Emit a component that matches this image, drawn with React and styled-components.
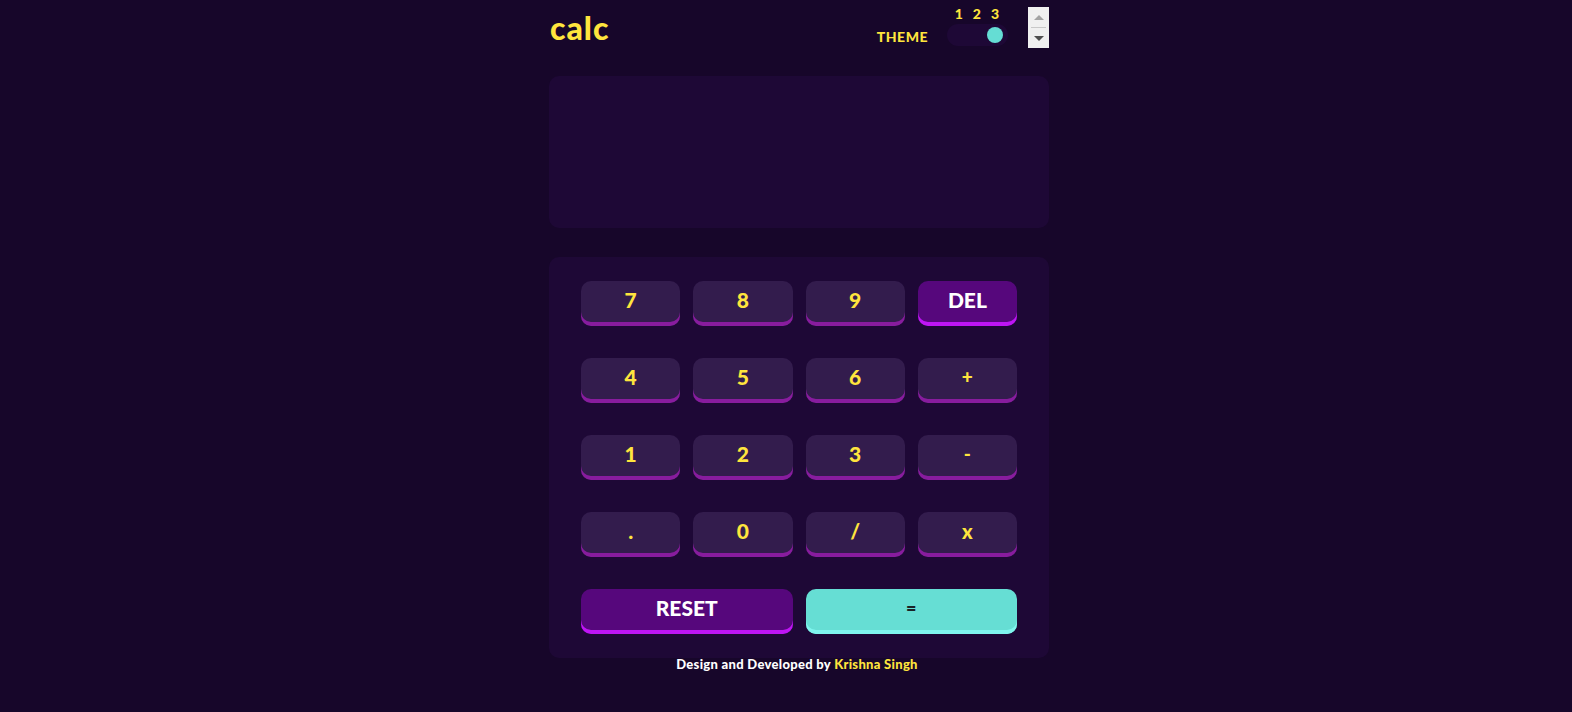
import React from "react";
import styled, { createGlobalStyle } from "styled-components";

const Global = createGlobalStyle`
  html, body { margin: 0; padding: 0; background: #17062a; }
  body { font-family: Lato, "Noto Sans", sans-serif; }
  * { box-sizing: border-box; }
`;

const Page = styled.div`
  min-height: 712px;
  display: flex;
  justify-content: center;
`;

const Calc = styled.div`
  width: 500px;
  margin-left: 26px;
  display: flex;
  flex-direction: column;
`;

const Header = styled.header`
  display: flex;
  justify-content: space-between;
  align-items: flex-start;
  margin-top: 7px;
  height: 41px;
`;

const Logo = styled.h1`
  margin: 3px 0 0 1px;
  font-size: 32px;
  line-height: 36px;
  font-weight: 900;
  color: #ffe53d;
  letter-spacing: 1px;
`;

const Right = styled.div`
  display: flex;
  align-items: flex-start;
`;

const ThemeLabel = styled.span`
  margin-top: 22px;
  margin-right: 19px;
  font-size: 14px;
  line-height: 16px;
  font-weight: 900;
  color: #ffe53d;
  letter-spacing: 0.5px;
`;

const ToggleCol = styled.div`
  display: flex;
  flex-direction: column;
  width: 61px;
  margin-right: 20px;
`;

const Numbers = styled.div`
  display: flex;
  justify-content: flex-end;
  gap: 10px;
  padding-right: 9px;
  font-size: 14px;
  line-height: 14px;
  font-weight: 900;
  color: #ffe53d;
`;

const Track = styled.div`
  margin-top: 3px;
  height: 22px;
  border-radius: 11px;
  background: #1e0836;
  display: flex;
  align-items: center;
  justify-content: flex-end;
  padding-right: 5px;
`;

const Knob = styled.div`
  width: 16px;
  height: 16px;
  border-radius: 50%;
  background: #65ddd4;
`;

const Spinner = styled.div`
  width: 21px;
  height: 41px;
  background: #f0f0f0;
  display: flex;
  flex-direction: column;
  align-items: center;
`;

const SpinHalf = styled.div`
  flex: 1;
  display: flex;
  align-items: center;
  justify-content: center;
  border-top: ${(p) => (p.$sep ? "1px solid #c8c8c8" : "none")};
  width: ${(p) => (p.$sep ? "15px" : "100%")};
`;

const Tri = styled.div`
  width: 0;
  height: 0;
  border-left: 5px solid transparent;
  border-right: 5px solid transparent;
  ${(p) =>
    p.$up
      ? `border-bottom: 5px solid #a3a3a3;`
      : `border-top: 5px solid #4f4f4f;`}
`;

const Display = styled.div`
  margin-top: 28px;
  height: 152px;
  border-radius: 10px;
  background: #1e0836;
`;

const Keypad = styled.div`
  margin-top: 29px;
  border-radius: 10px;
  background: #1e0836;
  padding: 24px 32px;
  display: grid;
  grid-template-columns: repeat(4, 1fr);
  column-gap: 13px;
  row-gap: 32px;
`;

const Key = styled.button`
  grid-column: span ${(p) => p.$span || 1};
  height: 45px;
  border: none;
  border-radius: 10px;
  padding: 0 0 8px;
  font-family: Lato, "Noto Sans", sans-serif;
  font-weight: 900;
  font-size: ${(p) => p.$size || 21}px;
  line-height: 1;
  cursor: pointer;
  background: ${(p) =>
    p.$kind === "accent" ? "#56077c" : p.$kind === "equal" ? "#66ded4" : "#331c4d"};
  color: ${(p) =>
    p.$kind === "accent" ? "#ffffff" : p.$kind === "equal" ? "#1a2327" : "#ffe53d"};
  box-shadow: inset 0 -4px 0
    ${(p) =>
      p.$kind === "accent" ? "#be15f4" : p.$kind === "equal" ? "#7ff5ee" : "#881c9e"};
`;

const Footer = styled.footer`
  text-align: center;
  font-size: 13px;
  line-height: 12px;
  font-weight: 900;
  color: #ffffff;
  letter-spacing: 0.3px;
  margin-left: -4px;
`;

const Name = styled.span`
  color: #ffe53d;
`;

const keys = [
  ["7"], ["8"], ["9"], ["DEL", "accent", 1, 21],
  ["4"], ["5"], ["6"], ["+", null, 1, 19],
  ["1"], ["2"], ["3"], ["-", null, 1, 19],
  ["."], ["0"], ["/"], ["x", null, 1, 20],
  ["RESET", "accent", 2, 21], ["=", "equal", 2, 18],
];

export default function App() {
  return (
    <Page>
      <Global />
      <Calc>
        <Header>
          <Logo>calc</Logo>
          <Right>
            <ThemeLabel>THEME</ThemeLabel>
            <ToggleCol>
              <Numbers>
                <span>1</span>
                <span>2</span>
                <span>3</span>
              </Numbers>
              <Track>
                <Knob />
              </Track>
            </ToggleCol>
            <Spinner>
              <SpinHalf>
                <Tri $up />
              </SpinHalf>
              <SpinHalf $sep>
                <Tri />
              </SpinHalf>
            </Spinner>
          </Right>
        </Header>
        <Display />
        <Keypad>
          {keys.map(([label, kind, span, size]) => (
            <Key key={label} $kind={kind} $span={span} $size={size}>
              {label}
            </Key>
          ))}
        </Keypad>
        <Footer>
          Design and Developed by <Name>Krishna Singh</Name>
        </Footer>
      </Calc>
    </Page>
  );
}
